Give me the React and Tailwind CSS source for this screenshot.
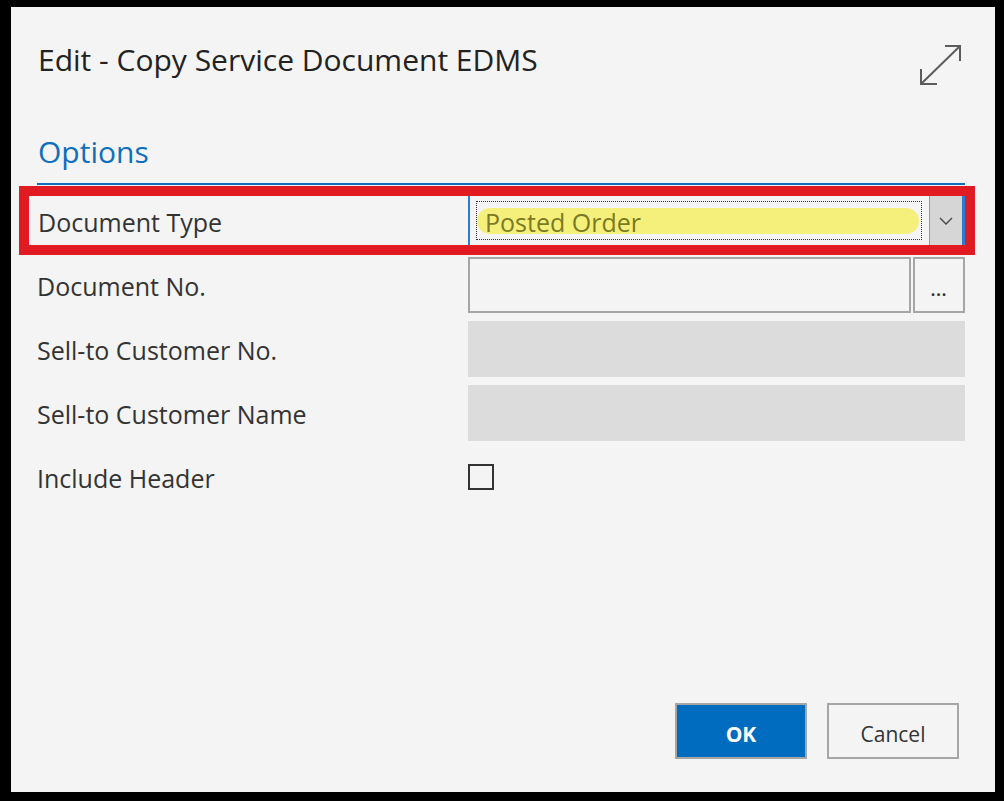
import { useState } from 'react'

const FONT = { fontFamily: '"Open Sans", "Noto Sans", sans-serif' }

function ExpandIcon() {
  return (
    <svg width="44" height="42" viewBox="0 0 44 42" fill="none" stroke="#5c5c5c" strokeWidth="2">
      <path d="M27 2 H42 V17" />
      <path d="M3 25 V40 H19" />
      <path d="M3.5 39.5 L41.5 2.5" />
    </svg>
  )
}

function Chevron() {
  return (
    <svg width="14" height="8" viewBox="0 0 14 8" fill="none" stroke="#444" strokeWidth="1.3">
      <path d="M1 1 L7 7 L13 1" />
    </svg>
  )
}

function Row({ label, children }) {
  return (
    <div className="flex h-[56px] items-center">
      <div className="w-[431px] pt-[3px] text-[25px] leading-none text-[#333]">{label}</div>
      <div className="flex h-full flex-1 items-center">{children}</div>
    </div>
  )
}

export default function App() {
  const [checked, setChecked] = useState(false)

  return (
    <div className="h-[801px] w-[1004px] bg-black pb-[9px] pl-[11px] pr-[9px] pt-[7px]" style={FONT}>
      <div className="flex h-full flex-col bg-[#f4f4f4] pl-[26px] pr-[30px]">
        <div className="mt-[37px] flex items-start justify-between">
          <h1 className="ml-[1px] mt-[1px] text-[30px] leading-none text-[#222]">Edit - Copy Service Document EDMS</h1>
          <div className="mr-[3px]">
            <ExpandIcon />
          </div>
        </div>

        <div className="mt-[51px] border-b-2 border-[#106ebe] pb-[16px]">
          <h2 className="ml-[1px] text-[30px] leading-none text-[#106ebe]">Options</h2>
        </div>

        <div className="-ml-[18px] -mr-[10px] mt-[1px] flex h-[69px] border-[10px] border-[#e21b23]">
          <div className="flex flex-1 items-center pl-[9px] pt-[3px] text-[25px] leading-none text-[#333]">Document Type</div>
          <div className="flex h-full w-[497px] border-l-2 border-r-[3px] border-[#2b7cd3]">
            <div className="flex-1 pb-[5px] pl-[6px] pr-[7px] pt-[5px]">
              <div className="flex h-full items-center border border-dotted border-[#333] pr-[2px] pt-[1px]">
                <div className="flex h-[26px] w-full items-center rounded-full bg-[#f5f07c] pl-[8px] pt-[2px] text-[25px] leading-none text-[#7b7a22]">
                  Posted Order
                </div>
              </div>
            </div>
            <div className="flex w-[33px] items-center justify-center border-l border-[#9a9a9a] bg-[#d6d6d6]">
              <Chevron />
            </div>
          </div>
        </div>

        <div className="mt-[2px]">
          <Row label="Document No.">
            <div className="h-full w-[443px] border-2 border-[#a6a6a6]" />
            <div className="ml-[2px] flex h-full flex-1 items-center justify-center border-2 border-[#a6a6a6] pt-[10px] text-[16px] font-bold leading-none tracking-[1px] text-[#333]">
              ...
            </div>
          </Row>
        </div>

        <div className="mt-[8px]">
          <Row label="Sell-to Customer No.">
            <div className="h-full w-full bg-[#dcdcdc]" />
          </Row>
        </div>

        <div className="mt-[8px]">
          <Row label="Sell-to Customer Name">
            <div className="h-full w-full bg-[#dcdcdc]" />
          </Row>
        </div>

        <div className="mt-[8px]">
          <Row label="Include Header">
            <button
              onClick={() => setChecked(!checked)}
              className="h-[26px] w-[26px] border-2 border-[#333] bg-transparent"
            />
          </Row>
        </div>

        <div className="flex-1" />

        <div className="mb-[33px] mr-[6px] flex justify-end gap-[20px]">
          <button className="h-[56px] w-[132px] border-2 border-[#a6a6a6] bg-[#006cbf] pt-[6px] text-[21px] font-bold leading-none text-white">
            OK
          </button>
          <button className="h-[56px] w-[132px] border-2 border-[#a6a6a6] bg-[#f4f4f4] pt-[6px] text-[21px] leading-none text-[#333]">
            Cancel
          </button>
        </div>
      </div>
    </div>
  )
}
